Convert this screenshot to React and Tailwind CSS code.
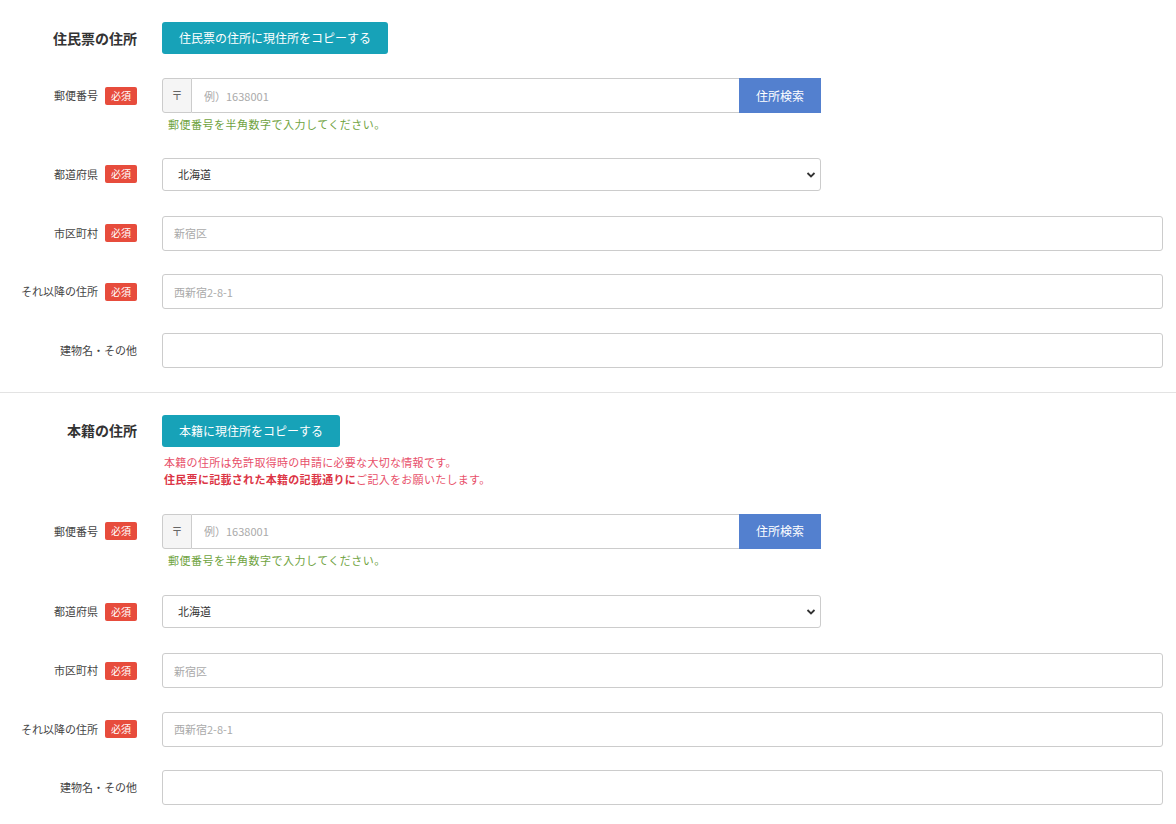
import React from "react";

const font = { fontFamily: '"Noto Sans CJK JP", "Noto Sans", sans-serif' };

function Badge() {
  return (
    <span className="ml-[7px] inline-flex h-[18px] w-[32px] items-center justify-center rounded-[2px] bg-[#e74c3c] text-[10px] leading-none text-white">
      必須
    </span>
  );
}

function Label({ text, required, h = "h-[35px]" }) {
  return (
    <div className={`flex w-[137px] shrink-0 items-center justify-end ${h}`}>
      <span className="text-[11px] text-[#444]">{text}</span>
      {required && <Badge />}
    </div>
  );
}

function PostalRow() {
  return (
    <div className="flex items-start">
      <Label text="郵便番号" required />
      <div className="ml-[25px]">
        <div className="flex h-[35px] w-[659px]">
          <div className="flex w-[30px] items-center justify-center rounded-l-[3px] border border-[#ccc] bg-[#f5f5f5] text-[11px] text-[#666]">
            〒
          </div>
          <input
            className="h-full flex-1 border-y border-[#ccc] px-[12px] text-[11px] text-[#333] outline-none placeholder:text-[#aaa]"
            placeholder="例）1638001"
          />
          <button className="w-[82px] bg-[#5380cf] text-[12px] text-white">住所検索</button>
        </div>
        <p className="mt-[3px] pl-[6px] text-[11px] tracking-[0.5px] text-[#6fa33f]">
          郵便番号を半角数字で入力してください。
        </p>
      </div>
    </div>
  );
}

function SelectRow() {
  return (
    <div className="flex items-center">
      <Label text="都道府県" required h="h-[33px]" />
      <div className="relative ml-[25px] flex h-[33px] w-[659px] items-center rounded-[3px] border border-[#ccc] bg-white pl-[15px] text-[11px] text-[#333]">
        北海道
        <svg className="absolute right-[4px] top-[12px]" width="10" height="8" viewBox="0 0 10 8">
          <path d="M1.5 2 L5 5.5 L8.5 2" fill="none" stroke="#333" strokeWidth="1.8" />
        </svg>
      </div>
    </div>
  );
}

function TextRow({ label, required, placeholder }) {
  return (
    <div className="flex items-center">
      <Label text={label} required={required} />
      <input
        className="ml-[25px] h-[35px] w-[1001px] rounded-[3px] border border-[#ccc] px-[11px] text-[11px] text-[#333] outline-none placeholder:text-[#aaa]"
        placeholder={placeholder}
      />
    </div>
  );
}

function Fields({ second }) {
  return (
    <>
      <PostalRow />
      <div className={second ? "mt-[27px]" : "mt-[25px]"}>
        <SelectRow />
      </div>
      <div className="mt-[25px] flex flex-col gap-[23.5px]">
        <TextRow label="市区町村" required placeholder="新宿区" />
        <TextRow label="それ以降の住所" required placeholder="西新宿2-8-1" />
        <TextRow label="建物名・その他" placeholder="" />
      </div>
    </>
  );
}

export default function App() {
  return (
    <div className="min-h-screen w-[1176px] bg-white" style={font}>
      <section className="pt-[22px] pb-[24px]">
        <div className="flex items-center">
          <div className="w-[137px] text-right text-[14px] font-bold text-[#333]">住民票の住所</div>
          <button className="ml-[25px] h-[32px] rounded-[3px] bg-[#17a2b8] px-[17px] text-[12px] text-white">
            住民票の住所に現住所をコピーする
          </button>
        </div>
        <div className="mt-[24px]">
          <Fields />
        </div>
      </section>

      <div className="h-px bg-[#e3e3e3]" />

      <section className="pt-[22px] pb-[20px]">
        <div className="flex items-start">
          <div className="flex h-[32px] w-[137px] items-center justify-end text-[14px] font-bold text-[#333]">
            本籍の住所
          </div>
          <div className="ml-[25px]">
            <button className="h-[32px] rounded-[3px] bg-[#17a2b8] px-[17px] text-[12px] text-white">
              本籍に現住所をコピーする
            </button>
            <div className="mt-[7px] pl-[2px] text-[11px] leading-[17px] tracking-[0.3px] text-[#e8506a]">
              <p>本籍の住所は免許取得時の申請に必要な大切な情報です。</p>
              <p>
                <span className="font-bold text-[#dc3545]">住民票に記載された本籍の記載通りに</span>
                ご記入をお願いたします。
              </p>
            </div>
          </div>
        </div>
        <div className="mt-[26px]">
          <Fields second />
        </div>
      </section>
    </div>
  );
}
